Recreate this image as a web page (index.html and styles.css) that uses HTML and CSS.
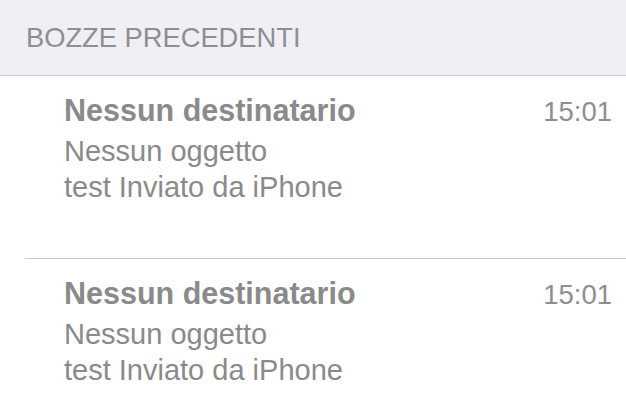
FILE: index.html
```html
<!DOCTYPE html>
<html lang="it">
<head>
    <meta charset="UTF-8">
    <meta name="viewport" content="width=device-width, initial-scale=1.0">
    <title>Bozze precedenti</title>
    <link rel="stylesheet" href="styles.css">
</head>
<body>
<div class="section-header">BOZZE PRECEDENTI</div>

<div class="draft-list">
    <div class="draft">
        <div class="draft-top">
            <div class="draft-to">Nessun destinatario</div>
            <div class="draft-time">15:01</div>
        </div>
        <div class="draft-subject">Nessun oggetto</div>
        <div class="draft-preview">test Inviato da iPhone</div>
    </div>
    <div class="draft">
        <div class="draft-top">
            <div class="draft-to">Nessun destinatario</div>
            <div class="draft-time">15:01</div>
        </div>
        <div class="draft-subject">Nessun oggetto</div>
        <div class="draft-preview">test Inviato da iPhone</div>
    </div>
</div>
</body>
</html>
```

FILE: styles.css
```css
body {
    margin: 0;
    background: #FFFFFF;
    font-family: 'Liberation Sans', Arial, sans-serif;
    overflow: hidden;
}

.section-header {
    height: 75px;
    display: flex;
    align-items: center;
    padding-left: 26px;
    background: #EFEFF4;
    border-bottom: 1px solid #C8C7CC;
    font-size: 27.3px;
    color: #8E8E93;
}

.draft {
    margin-left: 25px;
    padding: 16px 14px 53px 39px;
    color: #8A8A8A;
}

.draft + .draft {
    border-top: 1px solid #C8C7CC;
    padding-bottom: 20px;
}

.draft-top {
    display: flex;
    justify-content: space-between;
    align-items: baseline;
    margin-bottom: 3px;
}

.draft-to {
    font-size: 30.5px;
    font-weight: bold;
    line-height: 36px;
}

.draft-time {
    font-size: 27.5px;
    line-height: 36px;
    color: #8E8E8E;
}

.draft-subject,
.draft-preview {
    font-size: 29px;
    line-height: 36px;
}
```
